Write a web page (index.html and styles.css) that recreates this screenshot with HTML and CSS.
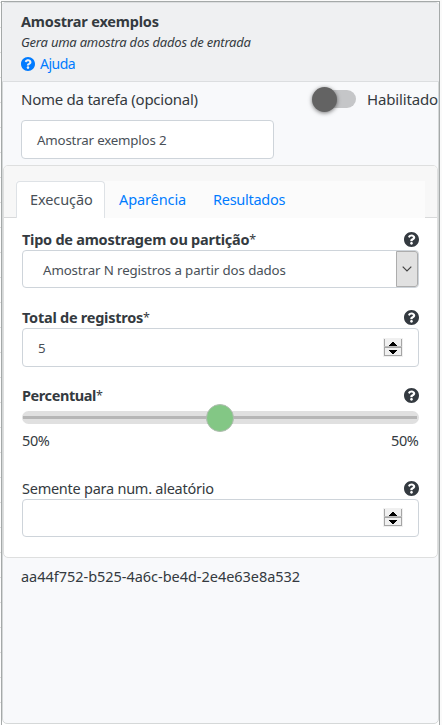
FILE: index.html
```html
<!DOCTYPE html>
<html lang="pt-BR">
<head>
<meta charset="utf-8">
<title>Amostrar exemplos</title>
<link rel="stylesheet" href="styles.css">
</head>
<body>
<svg class="defs" aria-hidden="true">
  <symbol id="help" viewBox="8 8 496 496"><path fill="currentColor" d="M504 256c0 136.997-111.043 248-248 248S8 392.997 8 256C8 119.083 119.043 8 256 8s248 111.083 248 248zM262.655 90c-54.497 0-89.255 22.957-116.549 63.758-3.536 5.286-2.353 12.415 2.715 16.258l34.699 26.31c5.205 3.947 12.621 3.008 16.665-2.122 17.864-22.658 30.113-35.797 57.303-35.797 20.429 0 45.698 13.148 45.698 32.958 0 14.976-12.363 22.667-32.534 33.976C247.128 238.528 216 254.941 216 296v4c0 6.627 5.373 12 12 12h56c6.627 0 12-5.373 12-12v-1.333c0-28.462 83.186-29.647 83.186-106.667 0-58.002-60.165-102-116.531-102zM256 338c-25.365 0-46 20.635-46 46 0 25.364 20.635 46 46 46s46-20.636 46-46c0-25.365-20.635-46-46-46z"/></symbol>
  <symbol id="spin" viewBox="0 0 20 19"><path fill="#f0f0f0" d="M0 0h20v19H0z"/><path fill="#a5a5a5" d="M1 1h1v17H1zM18 1h1v17h-1zM1 9h18v1H1zM1 17h18v1H1z"/><path fill="#bbb" d="M1 8h18v1H1z"/><path fill="#000" d="M9 4h2v1h1v1h1v1h1v1H6V7h1V6h1V5h1zM6 12h8v1h-1v1h-1v1h-1v1H9v-1H8v-1H7v-1H6z"/></symbol>
</svg>
<main class="panel">
  <header class="head">
    <h1 class="title">Amostrar exemplos</h1>
    <p class="subtitle">Gera uma amostra dos dados de entrada</p>
    <a class="help-link"><svg class="ico"><use href="#help"/></svg><span>Ajuda</span></a>
  </header>
  <section class="task">
    <div class="task-row">
      <span class="task-label">Nome da tarefa (opcional)</span>
      <span class="switch"><span class="knob"></span></span>
      <span class="enabled">Habilitado</span>
    </div>
    <div class="field name-field"><span>Amostrar exemplos 2</span></div>
  </section>
  <section class="card">
    <nav class="tabs-head">
      <div class="tabs">
        <a class="tab active">Execução</a>
        <a class="tab appearance">Aparência</a>
        <a class="tab results">Resultados</a>
      </div>
    </nav>
    <div class="body">
      <div class="group">
        <div class="label"><span><b>Tipo de amostragem ou partição</b><sup>*</sup></span><svg class="ico"><use href="#help"/></svg></div>
        <div class="field select"><span>Amostrar N registros a partir dos dados</span>
          <i class="drop"><svg width="10" height="6" viewBox="0 0 10 6"><path d="M.7.7 5 5 9.300.7" fill="none" stroke="#444" stroke-width="1.2"/></svg></i></div>
      </div>
      <div class="group">
        <div class="label"><span><b>Total de registros</b><sup>*</sup></span><svg class="ico"><use href="#help"/></svg></div>
        <div class="field number tall"><span>5</span><svg class="spin"><use href="#spin"/></svg></div>
      </div>
      <div class="group range-group">
        <div class="label"><span><b class="tight">Percentual</b><sup>*</sup></span><svg class="ico"><use href="#help"/></svg></div>
        <div class="range"><i class="thumb"></i></div>
        <div class="range-values"><span>50%</span><span>50%</span></div>
      </div>
      <div class="group">
        <div class="label"><span>Semente para num. aleatório</span><svg class="ico"><use href="#help"/></svg></div>
        <div class="field number"><svg class="spin"><use href="#spin"/></svg></div>
      </div>
    </div>
  </section>
  <p class="uuid">aa44f752-b525-4a6c-be4d-2e4e63e8a532</p>
</main>
</body>
</html>
```
FILE: styles.css
```css
* { box-sizing: border-box; }
body {
  margin: 0;
  height: 725px;
  overflow: hidden;
  padding: 1px 2px 0 1px;
  background: repeating-linear-gradient(#fdfdfd 0 2px, #dedede 2px 3px, #fdfdfd 3px 25px) 0 0 / 1px 100% no-repeat, #fafafa;
  font: 14.5px/20px "Noto Sans", "Open Sans", sans-serif;
  color: #343a40;
}
.defs { position: absolute; width: 0; height: 0; }
.panel {
  height: 724px;
  border: 1px solid #a5a9a9;
  border-bottom: 0;
  background: #fff;
  position: relative;
}
.panel::before {
  content: "";
  position: absolute;
  inset: 0 0 1px;
  border: 1px solid #d5d8d8;
  border-radius: 5px;
  background: #f8f9fb;
}
.panel > * { position: relative; }
.head {
  height: 80px;
  padding: 9px 19px 0;
  background: #eff0f2;
  border: 1px solid #dcdee0;
  border-width: 1px 0;
  border-radius: 4px 4px 0 0;
}
.title { margin: 0; font-size: 14.5px; line-height: 18px; font-weight: 700; letter-spacing: -.19px; }
.subtitle { margin: 0; padding-top: 1px; font-size: 13px; line-height: 22px; font-style: italic; letter-spacing: -.22px; }
.help-link { display: flex; align-items: center; gap: 5px; height: 22px; color: #007bff; font-size: 14px; letter-spacing: -.5px; }
.ico { width: 15px; height: 15px; flex: none; margin-top: 1px; }
.help-link .ico { width: 14px; height: 14px; margin-top: 0; }
.task { padding: 7px 0 0 19px; height: 83px; }
.task-row { display: flex; align-items: center; height: 20px; }
.task-label { flex: 1; font-size: 15px; letter-spacing: -.25px; }
.switch { width: 42px; height: 18px; margin-right: 11px; border-radius: 9px; background: #c5c6c8; display: flex; align-items: center; }
.knob { width: 25px; height: 25px; margin-left: -2px; flex: none; border-radius: 50%; background: #636363; box-shadow: 0 1px 4px #0008; }
.enabled { width: 72px; white-space: nowrap; font-size: 15px; letter-spacing: -.15px; }
.field {
  display: flex;
  align-items: center;
  height: 38px;
  border: 1px solid #ced4da;
  border-radius: 4px;
  background: #fff;
  color: #495057;
  font-size: 13.3px;
  letter-spacing: -.12px;
  padding-left: 15px;
}
.name-field { width: 253px; height: 39px; margin-top: 11px; letter-spacing: -.18px; }
.card { margin: 0 1px; height: 393px; border: 1px solid #dedfdf; border-radius: 5px; background: #fff; }
.tabs-head { height: 52px; padding: 15px 12px 0; background: #f7f7f7; border-bottom: 1px solid #d8d9da; border-radius: 4px 4px 0 0; }
.tabs { display: flex; height: 37px; background: #fbfbfb; }
.tab { padding: 8px 14px 0; color: #007bff; height: 37px; white-space: nowrap; }
.tab.active { width: 89px; padding: 7px 13px 0; color: #495057; background: #fff; border: 1px solid #dee2e6; border-bottom: 0; border-radius: 4px 4px 0 0; letter-spacing: -.1px; }
.appearance { width: 94px; letter-spacing: -.1px; }
.results { letter-spacing: -.27px; }
.body { padding: 12px 18.5px 0 18px; }
.group { height: 78px; }
.label { display: flex; align-items: center; justify-content: space-between; height: 20px; padding-bottom: 2px; letter-spacing: -.25px; }
.label sup { font-size: 12.5px; line-height: 1; vertical-align: 1px; }
.label .tight { letter-spacing: -.42px; }
.select { padding: 0 0 0 20px; justify-content: space-between; }
.select > span { padding-top: 1px; }
.drop { display: flex; align-items: center; justify-content: center; width: 22px; height: 36px; background: #e1e1e1; border: 1px solid #adadad; border-radius: 0 3px 3px 0; }
.tall { height: 39px; }
.number { justify-content: space-between; padding-right: 15px; }
.spin { width: 20px; height: 19px; margin: -1px 0 0 auto; }
.range-group { height: 93px; }
.range { height: 13px; margin-top: 5px; border-radius: 7px; background: linear-gradient(#b6b6b6, #b6b6b6) 50% 5px / calc(100% - 3px) 3px no-repeat, #e0e0e0; display: flex; align-items: center; justify-content: center; }
.thumb { width: 28px; height: 28px; flex: none; border-radius: 50%; background: #83c785; border: 1px solid #b0bdb0; }
.range-values { display: flex; justify-content: space-between; margin-top: 6px; letter-spacing: -.4px; }
.uuid { margin: 8px 0 0 19px; letter-spacing: -.03px; }
```
